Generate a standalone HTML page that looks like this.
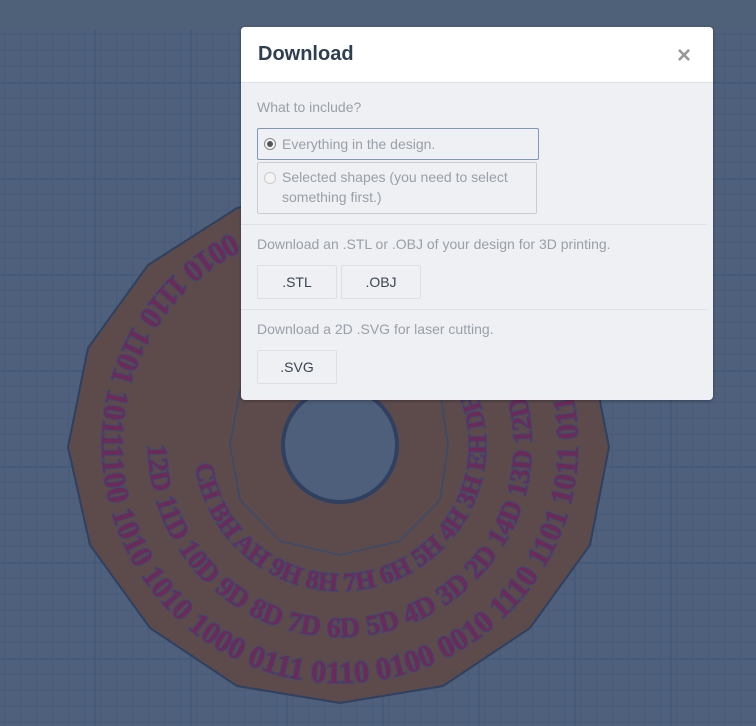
<!DOCTYPE html>
<html><head><meta charset="utf-8"><style>
html,body{margin:0;padding:0}
body{width:756px;height:726px;overflow:hidden;position:relative;background:#4f6079;font-family:"Liberation Sans",sans-serif}
.grid{position:absolute;left:0;top:30px;width:756px;height:696px;background-color:#4e607b;
background-image:linear-gradient(#41597a 1.5px,transparent 1.5px),linear-gradient(90deg,#41597a 1.5px,transparent 1.5px),linear-gradient(#475b7a 1px,transparent 1px),linear-gradient(90deg,#475b7a 1px,transparent 1px);
background-size:96px 96px,96px 96px,16px 16px,16px 16px;background-position:0 52px,94px 0,0 4px,4px 0}
svg.s{position:absolute;left:0;top:0}
.modal{position:absolute;left:241px;top:27px;width:472px;height:373px;background:#eef0f4;border-radius:4px;overflow:hidden;box-shadow:0 1px 3px rgba(0,0,0,.3)}
.hd{height:55px;background:#fff;border-bottom:1px solid #dde1e8;position:relative}
.hd h1{margin:0;position:absolute;left:17px;top:16px;font-size:20px;font-weight:bold;color:#2f3e50}
.x{position:absolute;right:22px;top:15px;font-size:24px;color:#9a9a9a;font-weight:bold}
.lbl{position:absolute;left:16px;font-size:14px;color:#9aa0a8}
.opt{position:absolute;left:16px;width:280px;border:1px solid #c9ccd2;border-radius:2px;font-size:14px;color:#9aa0a8;line-height:20px}
.btn{position:absolute;width:78px;height:32px;border:1px solid #dcdfe4;border-radius:2px;text-align:center;line-height:32px;font-size:14px;color:#3c4450;background:#eef0f4}
.rd{position:absolute;left:6px;width:10px;height:10px;border-radius:50%;border:1px solid #bbb;background:#f4f4f4}
.hr{position:absolute;left:0;right:6px;height:1px;background:#dde1e8}
</style></head><body>
<div class="grid"></div>
<svg class="s" width="756" height="726" viewBox="0 0 756 726">
<defs>
<path id="c1" d="M340,445 m-238,0 a238,238 0 1,0 476,0 a238,238 0 1,0 -476,0"/>
<path id="c2" d="M340,445 m-192,0 a192,192 0 1,0 384,0 a192,192 0 1,0 -384,0"/>
<path id="c3" d="M340,445 m-146,0 a146,146 0 1,0 292,0 a146,146 0 1,0 -292,0"/>
</defs>
<polygon points="340,185 445,205 530,262 590,350 609,447 590,545 530,628 443,686 340,703 237,686 150,628 90,545 68,447 88,348 148,265 237,208" fill="#5d4b4c" stroke="#2f4060" stroke-width="2"/>
<polygon points="340,335 400,349 440,390 448,445 440,500 400,541 340,555 280,541 240,500 230,445 240,390 280,349" fill="#5d4b4c" stroke="#3a4a68" stroke-width="1.5"/>
<circle cx="340" cy="445" r="57" fill="#4d5f7b" stroke="#2f4060" stroke-width="4"/>
<g font-family="Liberation Serif,serif" font-weight="bold" fill="#6c2a58" stroke="#3d4a70" stroke-width="2" paint-order="stroke">
<text font-size="31"><textPath href="#c1">1100 1010 1010 1000 0111 0110 0100 0010 1110 1101 1011 0110 1100 1010 1000 0111 0110 0100 0010 1110 1101 1011</textPath></text>
<text font-size="28"><textPath href="#c2">12D 11D 10D 9D 8D 7D 6D 5D 4D 3D 2D 14D 13D 12D 11D 10D 9D 8D</textPath></text>
<text font-size="26"><textPath href="#c3" startOffset="20">CH BH AH 9H 8H 7H 6H 5H 4H 3H EH DH CH BH AH</textPath></text>
</g>
</svg>
<div class="modal">
<div class="hd"><h1>Download</h1><div class="x">×</div></div>
<div class="lbl" style="top:72px">What to include?</div>
<div class="opt" style="top:101px;height:30px;border-color:#7f96bd;line-height:30px"><span class="rd" style="top:9px;border-color:#888"><span style="position:absolute;left:2px;top:2px;width:6px;height:6px;border-radius:50%;background:#555"></span></span><span style="margin-left:24px">Everything in the design.</span></div>
<div class="opt" style="top:135px;height:52px;padding-top:4px;box-sizing:border-box"><span class="rd" style="top:9px;border-color:#ccc"></span><div style="margin-left:24px">Selected shapes (you need to select something first.)</div></div>
<div class="hr" style="top:197px"></div>
<div class="lbl" style="top:209px">Download an .STL or .OBJ of your design for 3D printing.</div>
<div class="btn" style="left:16px;top:238px">.STL</div>
<div class="btn" style="left:100px;top:238px">.OBJ</div>
<div class="hr" style="top:282px"></div>
<div class="lbl" style="top:294px">Download a 2D .SVG for laser cutting.</div>
<div class="btn" style="left:16px;top:323px">.SVG</div>
</div>
</body></html>
